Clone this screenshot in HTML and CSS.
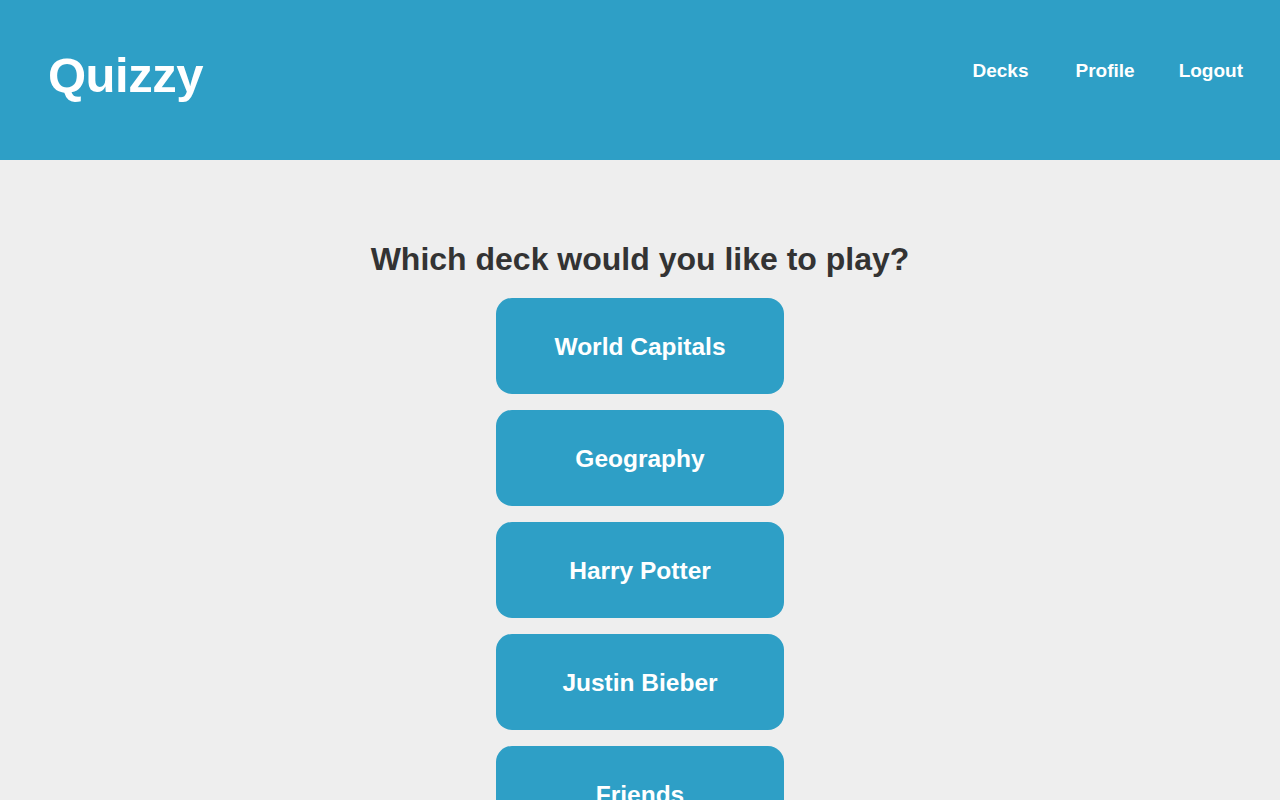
FILE: index.html
```html
<!DOCTYPE html>
<html>
<head>
<meta charset="utf-8">
<link rel="stylesheet" href="styles.css">
</head>
<body>
<header class="topbar">
  <div class="logo">Quizzy</div>
  <nav class="nav">
    <a class="nav-link nav-decks" href="#">Decks</a>
    <a class="nav-link" href="#">Profile</a>
    <a class="nav-link" href="#">Logout</a>
  </nav>
</header>
<main class="main">
  <h1 class="title">Which deck would you like to play?</h1>
  <div class="decks">
    <a class="deck" href="#">World Capitals</a>
    <a class="deck" href="#">Geography</a>
    <a class="deck" href="#">Harry Potter</a>
    <a class="deck" href="#">Justin Bieber</a>
    <a class="deck" href="#">Friends</a>
  </div>
</main>
</body>
</html>
```

FILE: styles.css
```css
html, body {
  margin: 0;
  padding: 0;
}
body {
  background: #eeeeee;
  font-family: "Liberation Sans", Arial, sans-serif;
  font-weight: bold;
  overflow: hidden;
  height: 800px;
}
.topbar {
  height: 160px;
  background: #2e9fc6;
  display: flex;
  align-items: center;
  justify-content: space-between;
  padding: 0 37px 0 48px;
  box-sizing: border-box;
}
.logo {
  color: #fff;
  font-size: 49px;
  letter-spacing: -0.5px;
  margin-top: -10px;
}
.nav {
  display: flex;
  gap: 44px;
  margin-top: -18px;
}
.nav-decks {
  margin-right: 3px;
}
.nav-link {
  color: #fff;
  text-decoration: none;
  font-size: 19px;
}
.main {
  display: flex;
  flex-direction: column;
  align-items: center;
  padding-top: 80px;
}
.title {
  margin: 0 0 20px;
  font-size: 32px;
  color: #333333;
  line-height: 38px;
}
.decks {
  display: flex;
  flex-direction: column;
  gap: 16px;
}
.deck {
  width: 288px;
  height: 96px;
  border-radius: 16px;
  background: #2e9fc6;
  color: #fff;
  text-decoration: none;
  font-size: 24.5px;
  padding-top: 2px;
  box-sizing: border-box;
  display: flex;
  align-items: center;
  justify-content: center;
}
```
